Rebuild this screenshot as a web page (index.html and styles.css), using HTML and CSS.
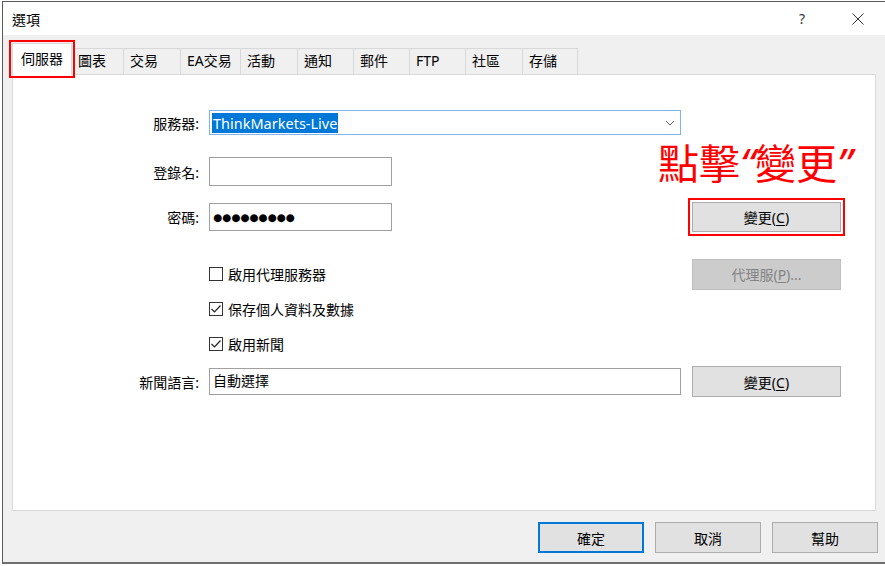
FILE: index.html
```html
<!DOCTYPE html>
<html lang="zh-TW">
<head>
  <meta charset="UTF-8">
  <title>選項</title>
  <link rel="stylesheet" href="styles.css">
</head>
<body>
  <div class="window">
    <div class="titlebar">
      <span class="title">選項</span>
      <span class="help">?</span>
      <span class="close">
        <svg width="12" height="12" viewBox="0 0 12 12"><path d="M0.5 0.5 L11.5 11.5 M11.5 0.5 L0.5 11.5" stroke="#333" stroke-width="1"/></svg>
      </span>
    </div>

    <div class="tabs">
      <div class="tab active">伺服器</div>
      <div class="tab w52">圖表</div>
      <div class="tab w57">交易</div>
      <div class="tab w60">EA交易</div>
      <div class="tab w57">活動</div>
      <div class="tab">通知</div>
      <div class="tab">郵件</div>
      <div class="tab">FTP</div>
      <div class="tab w57">社區</div>
      <div class="tab w55">存儲</div>
    </div>

    <div class="panel">
      <div class="note">點擊<span class="q">“</span>變更<span class="q">”</span></div>

      <div class="row row-server">
        <span class="lbl">服務器:</span>
        <div class="field">
          <div class="combo">
            <span class="sel">ThinkMarkets-Live</span>
            <svg class="chev" width="10" height="6" viewBox="0 0 10 6"><polyline points="1,1 5,5 9,1" fill="none" stroke="#606060" stroke-width="1"/></svg>
          </div>
        </div>
      </div>

      <div class="row row-login">
        <span class="lbl">登錄名:</span>
        <div class="field"><div class="input short"></div></div>
      </div>

      <div class="row row-pass">
        <span class="lbl">密碼:</span>
        <div class="field"><div class="input short pass">●●●●●●●●●</div></div>
        <button class="btn marked">變更(<u>C</u>)</button>
      </div>

      <div class="row row-check first">
        <span class="lbl"></span>
        <div class="field">
          <label class="check"><span class="box"></span>啟用代理服務器</label>
        </div>
        <button class="btn disabled">代理服(<u>P</u>)...</button>
      </div>

      <div class="row row-check">
        <span class="lbl"></span>
        <div class="field">
          <label class="check"><span class="box"><svg width="12" height="12" viewBox="0 0 12 12"><polyline points="1.5,6 4.5,9 10.5,2.5" fill="none" stroke="#222" stroke-width="1.2"/></svg></span>保存個人資料及數據</label>
        </div>
      </div>

      <div class="row row-check">
        <span class="lbl"></span>
        <div class="field">
          <label class="check"><span class="box"><svg width="12" height="12" viewBox="0 0 12 12"><polyline points="1.5,6 4.5,9 10.5,2.5" fill="none" stroke="#222" stroke-width="1.2"/></svg></span>啟用新聞</label>
        </div>
      </div>

      <div class="row row-news">
        <span class="lbl">新聞語言:</span>
        <div class="field"><div class="input wide">自動選擇</div></div>
        <button class="btn">變更(<u>C</u>)</button>
      </div>
    </div>

    <div class="footer">
      <button class="btn big default">確定</button>
      <button class="btn big">取消</button>
      <button class="btn big">幫助</button>
    </div>
  </div>
</body>
</html>
```

FILE: styles.css
```css
html, body {
  margin: 0;
  padding: 0;
  background: #fff;
  font-family: "Noto Sans", "Noto Sans CJK TC", sans-serif;
  font-size: 14px;
  color: #000;
}
.window {
  margin: 1px 0 0 2px;
  width: 882px;
  height: 560px;
  border-top: 1px solid #5a5a5a;
  border-left: 1px solid #5a5a5a;
  border-bottom: 2px solid #707070;
  background: #f0f0f0;
  display: flex;
  flex-direction: column;
}
.titlebar {
  height: 33px;
  background: #fff;
  display: flex;
  align-items: center;
  padding-left: 9px;
}
.title {
  flex: 1;
}
.help {
  font-size: 14px;
  color: #333;
  width: 20px;
  margin-right: 33px;
}
.close {
  margin-right: 21px;
  display: flex;
}
.tabs {
  display: flex;
  align-items: flex-end;
  height: 39px;
  padding-left: 9px;
}
.tab {
  box-sizing: border-box;
  width: 56px;
  height: 26px;
  line-height: 24px;
  padding-left: 6px;
  border: 1px solid #d9d9d9;
  border-left: none;
  border-bottom: none;
  background: #f0f0f0;
}
.tab.w52 { width: 52px; }
.tab.w55 { width: 55px; }
.tab.w57 { width: 57px; }
.tab.w60 { width: 60px; }
.tab.active {
  width: 60px;
  height: 32px;
  line-height: 30px;
  padding-left: 8px;
  background: #fff;
  border-left: 1px solid #d9d9d9;
  margin-bottom: -1px;
  position: relative;
  z-index: 1;
  outline: 2px solid #ff0000;
  outline-offset: 1px;
}
.panel {
  position: relative;
  margin-left: 9px;
  width: 862px;
  height: 435px;
  background: #fff;
  border: 1px solid #d9d9d9;
}
.row {
  display: flex;
  align-items: center;
}
.lbl {
  width: 186px;
  margin-right: 10px;
  text-align: right;
  flex-shrink: 0;
}
.field {
  width: 472px;
  margin-right: 11px;
  flex-shrink: 0;
}
.row-server { margin-top: 35px; height: 25px; }
.row-login { margin-top: 22px; height: 29px; }
.row-pass { margin-top: 16px; height: 30px; }
.row-check { height: 24px; margin-top: 11px; }
.row-check.first { margin-top: 30px; }
.row-news { margin-top: 10px; height: 31px; }
.combo {
  box-sizing: border-box;
  width: 472px;
  height: 25px;
  border: 1px solid #7eb4ea;
  display: flex;
  align-items: center;
  padding-left: 2px;
}
.sel {
  background: #0078d7;
  color: #fff;
  font-size: 14.5px;
  line-height: 20px;
  padding: 0 1px;
}
.chev {
  margin-left: auto;
  margin-right: 5px;
}
.input {
  box-sizing: border-box;
  height: 29px;
  border: 1px solid #a0a0a0;
  background: #fff;
  padding-left: 3px;
  line-height: 26px;
}
.input.short { width: 183px; }
.row-pass .input { height: 28px; }
.input.wide { width: 472px; height: 27px; line-height: 24px; }
.pass {
  font-family: "DejaVu Sans", sans-serif;
  font-size: 10.4px;
  line-height: 26px;
}
.btn {
  box-sizing: border-box;
  width: 149px;
  height: 30px;
  background: #e1e1e1;
  border: 1px solid #adadad;
  font-family: "Noto Sans", "Noto Sans CJK TC", sans-serif;
  font-size: 14px;
  color: #000;
  padding: 0;
  flex-shrink: 0;
}
.btn u {
  text-decoration: underline;
  text-underline-offset: 2px;
}
.btn.marked {
  outline: 2px solid #ff0000;
  outline-offset: 2px;
}
.btn.disabled {
  background: #cccccc;
  border-color: #bfbfbf;
  color: #838383;
  height: 31px;
}
.row-news .btn { height: 31px; }
.check {
  display: flex;
  align-items: center;
  white-space: nowrap;
}
.box {
  box-sizing: border-box;
  width: 14px;
  height: 14px;
  border: 1px solid #333;
  background: #fff;
  margin-right: 5px;
  display: flex;
  align-items: center;
  justify-content: center;
}
.note {
  position: absolute;
  left: 645px;
  top: 66px;
  color: #ff0000;
  font-family: "Noto Sans CJK TC", sans-serif;
  font-size: 41px;
  line-height: 1;
  white-space: nowrap;
}
.note .q {
  font-family: "Noto Sans", sans-serif;
  font-style: italic;
  font-size: 42px;
}
.footer {
  display: flex;
  justify-content: flex-end;
  gap: 11px;
  padding: 11px 7px 0 0;
}
.btn.big {
  width: 106px;
  height: 31px;
}
.btn.default {
  border: 2px solid #0078d7;
}
```
